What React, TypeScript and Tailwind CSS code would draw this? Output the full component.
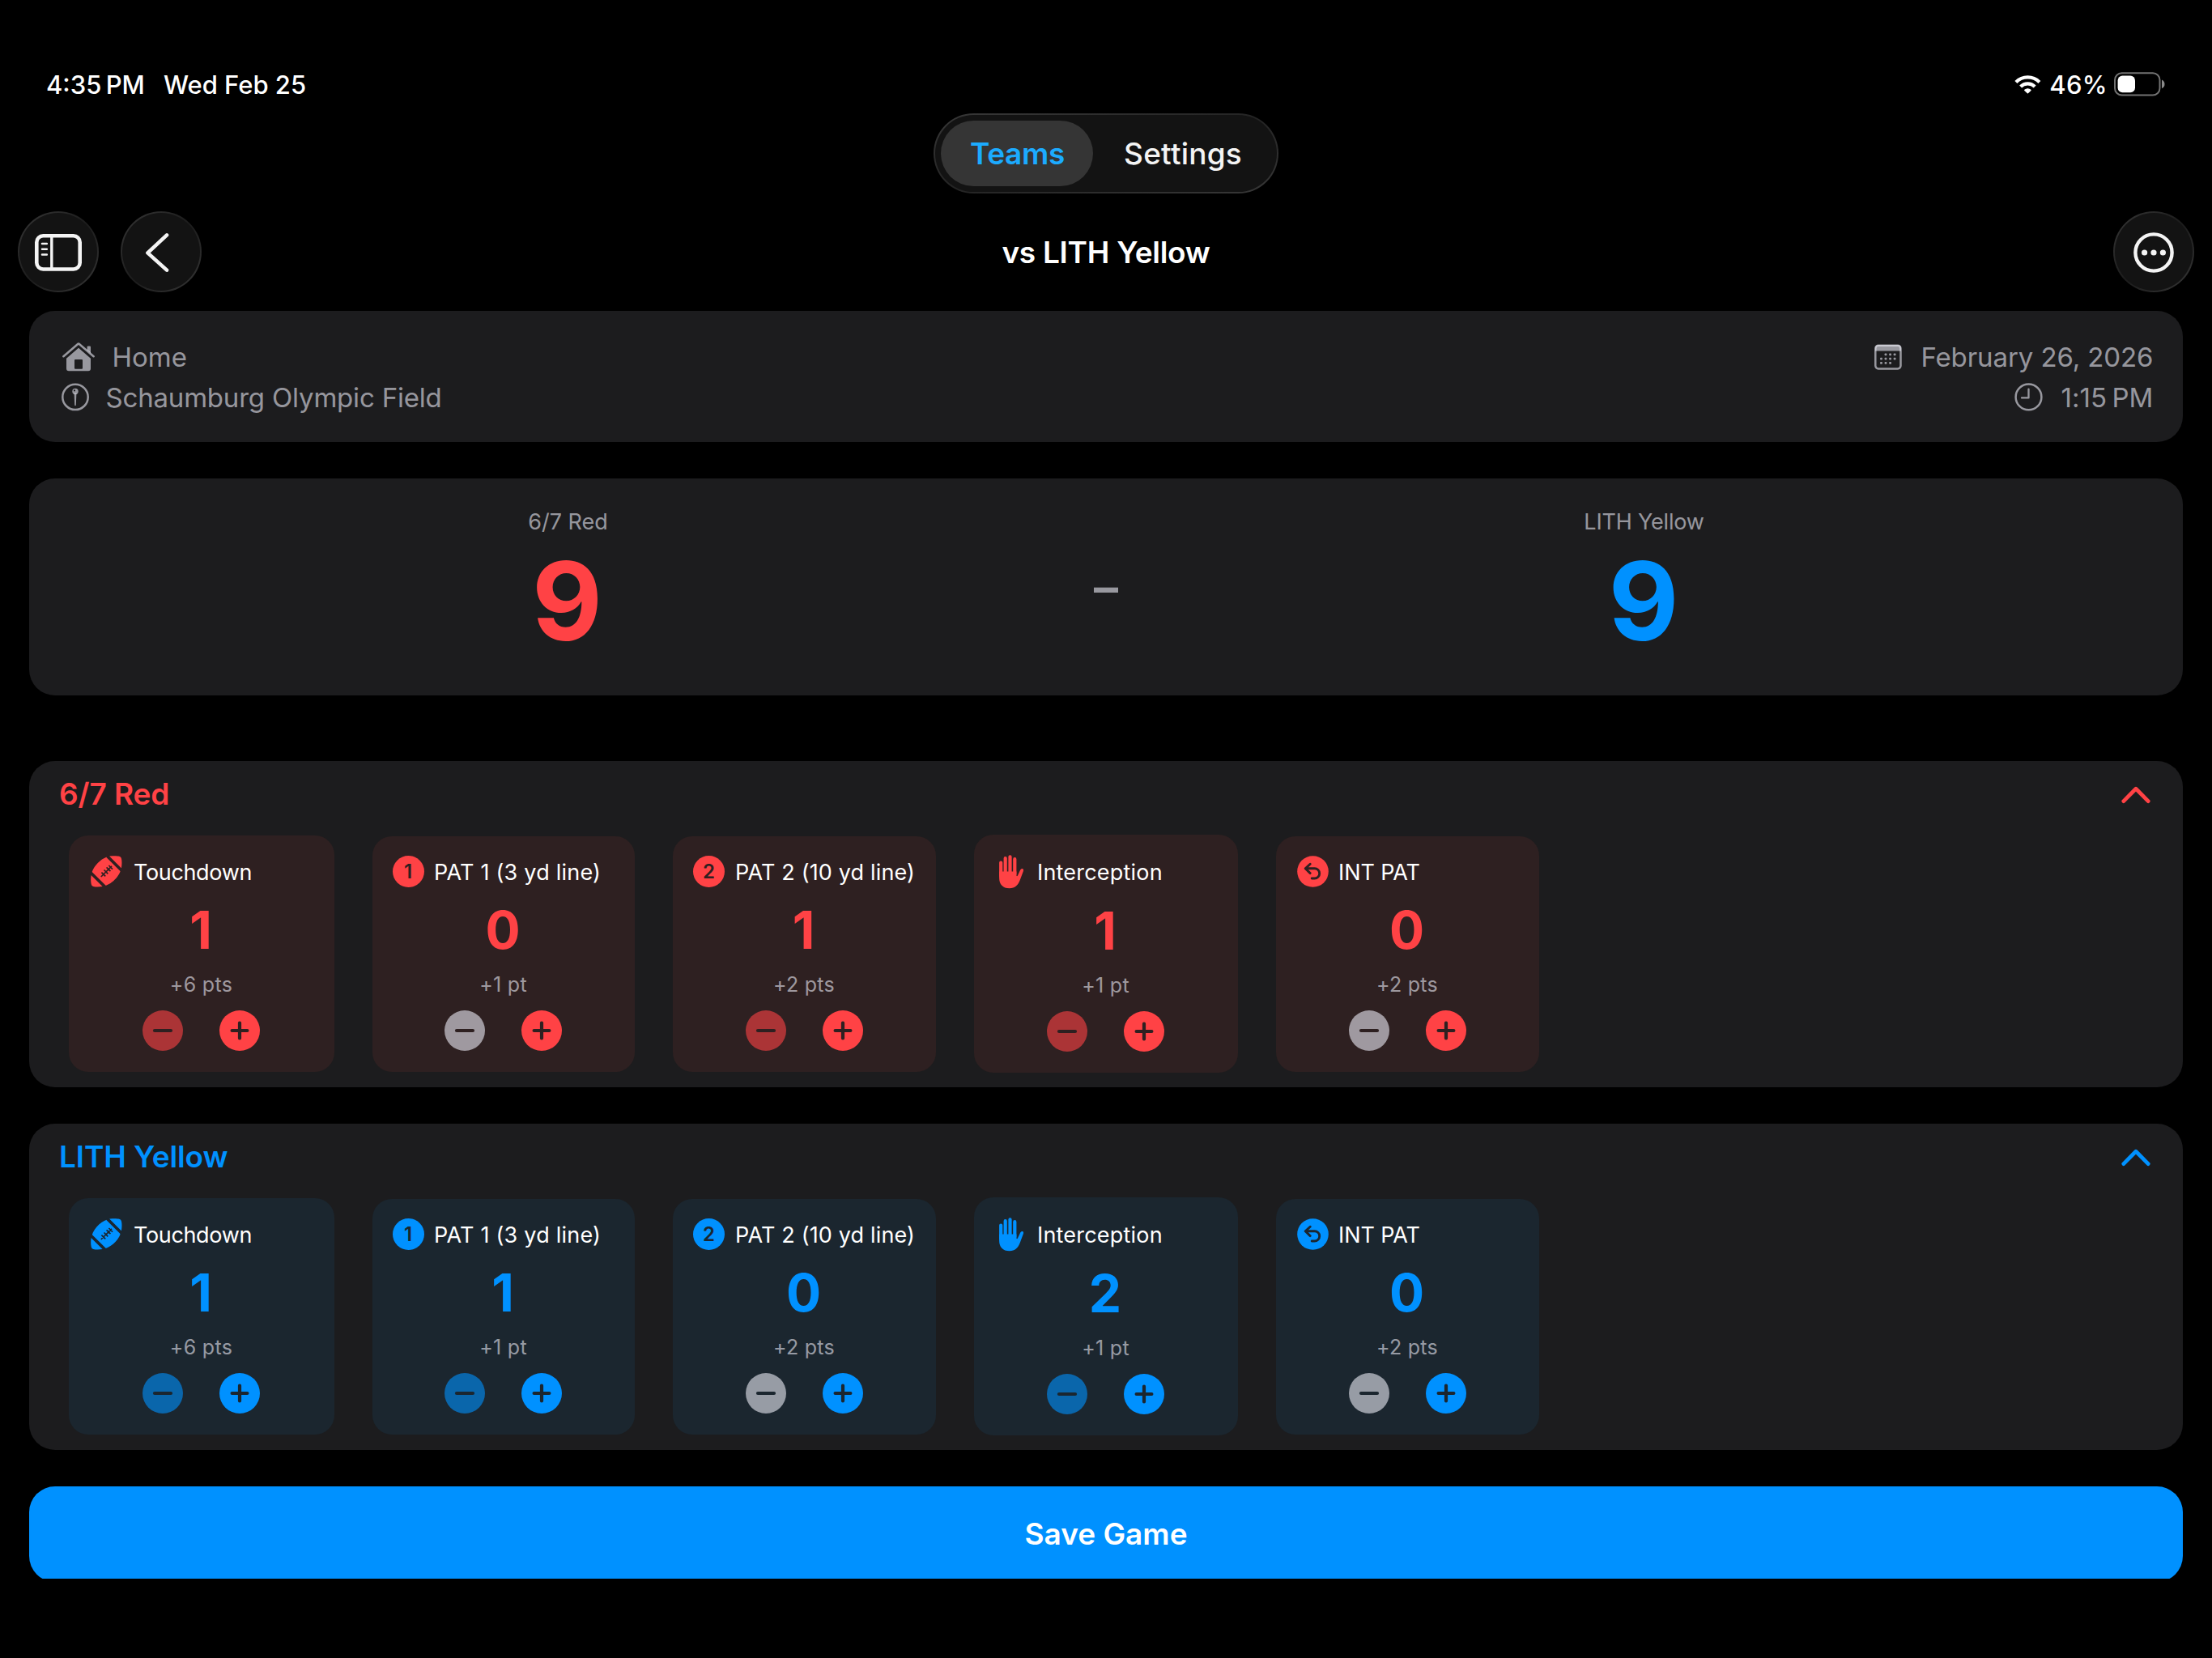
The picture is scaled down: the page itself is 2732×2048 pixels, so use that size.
import React, { useState } from 'react';
import clsx from 'clsx';

type TeamKey = 'home' | 'away';
type PlayKey = 'touchdown' | 'pat1' | 'pat2' | 'interception' | 'intPat';

interface Play {
    key: PlayKey;
    label: string;
    points: number;
    card: string;
    header: string;
    icon: string;
    text: string;
}

interface Theme {
    text: string;
    fill: string;
    card: string;
    cutText: string;
    cutStroke: string;
}

const plays: Play[] = [
    { key: 'touchdown', label: 'Touchdown', points: 6, card: 'w-[328px]', header: 'h-[41px]', icon: 'w-[44px] mr-3', text: 'tracking-[-0.35px]' },
    { key: 'pat1', label: 'PAT 1 (3 yd line)', points: 1, card: 'w-[324px]', header: 'h-[40px]', icon: 'w-[40px] mr-3', text: 'tracking-[0.22px]' },
    { key: 'pat2', label: 'PAT 2 (10 yd line)', points: 2, card: 'w-[325px]', header: 'h-[40px]', icon: 'w-[41px] mr-3', text: 'tracking-[0.16px]' },
    { key: 'interception', label: 'Interception', points: 1, card: 'w-[326px]', header: 'h-[43px]', icon: 'w-[45px] mr-[9px]', text: 'tracking-[0.2px]' },
    { key: 'intPat', label: 'INT PAT', points: 2, card: 'w-[325px]', header: 'h-[40px]', icon: 'w-[42px] mr-[11px]', text: 'tracking-[-0.1px]' },
];

const themes: Record<TeamKey, Theme> = {
    home: {
        text: 'text-[#ff4245]',
        fill: 'bg-[#ff4245]',
        card: 'bg-[#2e2021]',
        cutText: 'text-[#2e2021]',
        cutStroke: 'stroke-[#2e2021]',
    },
    away: {
        text: 'text-[#0091ff]',
        fill: 'bg-[#0091ff]',
        card: 'bg-[#1b262f]',
        cutText: 'text-[#1b262f]',
        cutStroke: 'stroke-[#1b262f]',
    },
};

const teamNames: Record<TeamKey, string> = { home: '6/7 Red', away: 'LITH Yellow' };

function WifiIcon() {
    return (
        <svg width="33" height="23" viewBox="0 0 33 23" fill="none" stroke="currentColor" strokeWidth="4.2">
            <path d="M1.9 8.4A20.5 20.5 0 0 1 30.9 8.4" />
            <path d="M7.6 14A12.5 12.5 0 0 1 25.2 14" />
            <path d="M16.4 21.6L12.9 18.3A5.2 5.2 0 0 1 19.9 18.3Z" fill="currentColor" strokeWidth="1.6" strokeLinejoin="round" />
        </svg>
    );
}

function BatteryIcon() {
    return (
        <svg width="63" height="30" viewBox="0 0 63 30">
            <rect x="1" y="1.2" width="55.5" height="27.4" rx="8.6" fill="none" stroke="#727272" strokeWidth="2" />
            <rect x="4.6" y="4.6" width="21.4" height="20.6" rx="5.8" fill="#fff" />
            <path d="M59 9.6C61.4 10.6 62.5 12.6 62.5 14.9C62.5 17.2 61.4 19.2 59 20.2Z" fill="#8a8a8a" />
        </svg>
    );
}

function SidebarIcon() {
    return (
        <svg width="58" height="46" viewBox="0 0 58 46" fill="none" stroke="currentColor" strokeLinecap="round" className="mt-[2px] -ml-px">
            <rect x="2.3" y="2.3" width="53.4" height="41.2" rx="8" strokeWidth="4.6" />
            <path d="M20.8 3V43" strokeWidth="3.4" />
            <path d="M9 12H14.8M9 18.8H14.8M9 25.5H14.8" strokeWidth="2.6" />
        </svg>
    );
}

function BackIcon() {
    return (
        <svg width="30" height="50" viewBox="0 0 30 50" fill="none" stroke="currentColor" strokeWidth="4.6" strokeLinecap="round" strokeLinejoin="round" className="mt-[2px] -ml-[10px]">
            <path d="M27 3.4L3.4 25.4L27 46.6" />
        </svg>
    );
}

function MoreIcon() {
    return (
        <svg width="50" height="50" viewBox="0 0 50 50" className="mt-px">
            <circle cx="25" cy="25" r="22.6" fill="none" stroke="currentColor" strokeWidth="4.4" />
            <circle cx="13.6" cy="25" r="3.6" fill="currentColor" />
            <circle cx="25" cy="25" r="3.6" fill="currentColor" />
            <circle cx="36.4" cy="25" r="3.6" fill="currentColor" />
        </svg>
    );
}

function HouseIcon() {
    return (
        <svg width="40" height="36" viewBox="0 0 40 36" className="ml-px">
            <path d="M1.4 17.2L18.8 2.2Q20 1.2 21.2 2.2L38.6 17.2" fill="none" stroke="currentColor" strokeWidth="2.6" strokeLinecap="round" strokeLinejoin="round" />
            <path d="M30.6 9.5V5.4Q30.6 4.4 31.6 4.4H34Q35 4.4 35 5.4V13.4Z" fill="currentColor" />
            <path d="M20 6.8L35 19.8V32.3Q35 35.3 32 35.3H8Q5 35.3 5 32.3V19.8ZM15 22V31.8Q15 32.8 16 32.8H24Q25 32.8 25 31.8V22Q25 21 24 21H16Q15 21 15 22Z" fill="currentColor" fillRule="evenodd" />
        </svg>
    );
}

function PinIcon() {
    return (
        <svg width="34" height="35" viewBox="0 0 34 35">
            <circle cx="17" cy="17.4" r="15.7" fill="none" stroke="currentColor" strokeWidth="2.5" />
            <circle cx="17" cy="10.4" r="3.7" fill="currentColor" />
            <circle cx="16" cy="9.4" r="1.1" className="fill-[#1c1c1e]" />
            <path d="M15.6 13H18.4L17.8 27.4Q17 29 16.2 27.4Z" fill="currentColor" />
        </svg>
    );
}

function CalendarIcon() {
    const dots = [
        [14, 12.8], [19.6, 12.8], [25.1, 12.8],
        [8.5, 18.2], [14, 18.2], [19.6, 18.2], [25.1, 18.2],
        [8.5, 23.4], [14, 23.4], [19.6, 23.4],
    ];

    return (
        <svg width="34" height="32" viewBox="0 0 34 32">
            <rect x="1.3" y="1.8" width="31.2" height="28.6" rx="3.6" fill="none" stroke="currentColor" strokeWidth="2.5" />
            <path d="M1 8.6V5Q1 1 5 1H29Q33 1 33 5V8.6Z" fill="currentColor" />
            {dots.map(([x, y]) => (
                <rect key={`${x}-${y}`} x={x - 1.4} y={y - 1.4} width="2.8" height="2.8" rx="0.8" fill="currentColor" />
            ))}
        </svg>
    );
}

function ClockIcon() {
    return (
        <svg width="35" height="35" viewBox="0 0 35 35" fill="none" stroke="currentColor" strokeWidth="2.5" strokeLinecap="round" strokeLinejoin="round">
            <circle cx="17.5" cy="17.4" r="15.9" />
            <path d="M17.5 7.6V18.4H9" strokeWidth="2.3" />
        </svg>
    );
}

function ChevronUp() {
    return (
        <svg width="36" height="22" viewBox="0 0 36 22" fill="none" stroke="currentColor" strokeWidth="4.8" strokeLinecap="round" strokeLinejoin="round">
            <path d="M2.8 18.6L18 3.2L33.2 18.6" />
        </svg>
    );
}

function FootballIcon({ cut }: { cut: string }) {
    return (
        <svg width="39" height="39" viewBox="0 0 39 39" fill="none">
            <path d="M24 .6C28 0 32.5 0 35.2 .8C36.9 1.3 37.6 2.2 38 3.8C38.7 6.8 38.6 11 38 14.6C36.3 25.4 25.6 36.3 14.5 38.1C11 38.7 6 38.8 3.3 38C1.8 37.5 1 36.6 .7 35C0 32 0 28 .6 24.6C2.4 13.4 13 2.4 24 .6Z" fill="currentColor" />
            <path d="M20.4 .4L39 19M-.4 20.6L18.6 39.4" className={cut} strokeWidth="3.6" />
            <path d="M12.8 26L26 12.8M13.4 20.6L18.2 25.4M16.5 17.5L21.3 22.3M19.6 14.4L24.4 19.2M22.4 12L27 16.6" className={cut} strokeWidth="1.7" />
        </svg>
    );
}

function HandIcon() {
    return (
        <svg width="31" height="42" viewBox="0 0 31 42">
            <path d="M2.2 9.6V26M7.7 4.2V26M13.5 2.3V26M19.3 5.2V24" fill="none" stroke="currentColor" strokeWidth="4.2" strokeLinecap="round" />
            <path d="M.1 20.5H21.4V25.3C21.6 26.6 22.4 26.5 22.9 25.5L26.2 18.6C27.6 15.8 31 16.8 29.9 19.9L26 30.6C23.4 38 19.5 41.2 12.8 41.2C4.6 41.2 .1 36.2 .1 28.4Z" fill="currentColor" />
        </svg>
    );
}

function UndoIcon({ cut }: { cut: string }) {
    return (
        <svg width="39" height="39" viewBox="0 0 39 39" fill="none">
            <circle cx="19.5" cy="19.5" r="19.3" fill="currentColor" />
            <path d="M16.2 10.2L10.2 15.8L16.2 21.6M10.6 15.8H21.6A6.1 6.1 0 0 1 21.6 28H18.2" className={cut} strokeWidth="2.9" strokeLinecap="round" strokeLinejoin="round" />
        </svg>
    );
}

function NumberBadge({ value, theme }: { value: number; theme: Theme }) {
    return (
        <span className={clsx('w-[39px] h-[39px] shrink-0 rounded-full flex items-center justify-center text-2xl leading-none font-semibold', theme.fill, theme.cutText)}>
            {value}
        </span>
    );
}

function PlayIcon({ play, theme }: { play: PlayKey; theme: Theme }) {
    if (play === 'touchdown') return <FootballIcon cut={theme.cutStroke} />;
    if (play === 'pat1') return <NumberBadge value={1} theme={theme} />;
    if (play === 'pat2') return <NumberBadge value={2} theme={theme} />;
    if (play === 'interception') return <HandIcon />;
    return <UndoIcon cut={theme.cutStroke} />;
}

function StepButton({ kind, theme, disabled, onClick }: { kind: 'minus' | 'plus'; theme: Theme; disabled?: boolean; onClick: () => void }) {
    return (
        <button onClick={onClick} disabled={disabled} aria-label={kind} className={disabled ? 'text-[#ebebf5]/60' : theme.text}>
            <svg width="50" height="50" viewBox="0 0 50 50" fill="none">
                <circle cx="25" cy="25" r="25" fill="currentColor" className={clsx(kind === 'minus' && !disabled && 'opacity-60')} />
                <path d={kind === 'minus' ? 'M15 25H35' : 'M15.6 25H34.4M25 15.6V34.4'} className={theme.cutStroke} strokeWidth="4.2" strokeLinecap="round" />
            </svg>
        </button>
    );
}

function PlayCard({ play, count, theme, onChange }: { play: Play; count: number; theme: Theme; onChange: (delta: number) => void }) {
    return (
        <div className={clsx('flex flex-col items-center rounded-[24px] py-6', play.card, theme.card)}>
            <div className={clsx('w-full flex items-center pl-6', play.header)}>
                <div className={clsx('flex justify-center shrink-0', play.icon, theme.text)}>
                    <PlayIcon play={play.key} theme={theme} />
                </div>
                <span className={clsx('pt-0.5 text-[27px] leading-none text-white whitespace-nowrap', play.text)}>{play.label}</span>
            </div>

            <div className={clsx('mt-4 pr-0.5 h-[73px] leading-[72px] text-[64px] font-bold', theme.text)}>{count}</div>

            <div className="mt-[17px] pr-px h-[27px] leading-[27px] text-[25px] tracking-[0.3px] text-[#ebebf5]/60">
                +{play.points} {play.points === 1 ? 'pt' : 'pts'}
            </div>

            <div className="mt-[17px] pr-px h-[52px] mb-px flex items-center gap-[45px]">
                <StepButton kind="minus" theme={theme} disabled={count === 0} onClick={() => onChange(-1)} />
                <StepButton kind="plus" theme={theme} onClick={() => onChange(1)} />
            </div>
        </div>
    );
}

function RoundButton({ label, children }: { label: string; children: React.ReactNode }) {
    return (
        <button aria-label={label} className="w-[100px] h-[100px] rounded-full p-[2px] bg-linear-to-br from-[#383838] via-[#1c1c1c] to-[#383838]">
            <span className="w-full h-full rounded-full bg-[#131313] text-[#f4f4f4] flex items-center justify-center">{children}</span>
        </button>
    );
}

export default function App() {
    const [open, setOpen] = useState<Record<TeamKey, boolean>>({ home: true, away: true });
    const [counts, setCounts] = useState<Record<TeamKey, Record<PlayKey, number>>>({
        home: { touchdown: 1, pat1: 0, pat2: 1, interception: 1, intPat: 0 },
        away: { touchdown: 1, pat1: 1, pat2: 0, interception: 2, intPat: 0 },
    });

    const score = (team: TeamKey) => plays.reduce((sum, play) => sum + play.points * counts[team][play.key], 0);

    const change = (team: TeamKey, key: PlayKey, delta: number) => {
        setCounts((prev) => ({
            ...prev,
            [team]: { ...prev[team], [key]: Math.max(0, prev[team][key] + delta) },
        }));
    };

    return (
        <div className="w-[2732px] h-[2048px] overflow-hidden bg-black text-white font-['Inter','Liberation_Sans',sans-serif]">

            {/* Status bar */}
            <div className="mt-[84px] h-10 pl-[57px] pr-[58px] flex items-center justify-between text-[31px] leading-10 font-medium">
                <div className="pt-px flex gap-[23px]">
                    <span>4:35{'\u2009'}PM</span>
                    <span>Wed Feb 25</span>
                </div>
                <div className="flex items-center">
                    <WifiIcon />
                    <span className="pt-px ml-2.5 mr-2 tracking-[0.4px]">46%</span>
                    <BatteryIcon />
                </div>
            </div>

            {/* Tabs */}
            <div className="mt-4 flex justify-center">
                <div className="w-[426px] h-[99px] rounded-full p-[2px] bg-linear-to-br from-[#383838] via-[#242424] to-[#383838]">
                    <div className="h-full rounded-full bg-[#131313] p-[7px] flex items-center text-[37px]">
                        <button className="w-[188px] h-[81px] pl-px rounded-full bg-[#353535] text-[#1cabff] font-semibold tracking-[-0.3px]">Teams</button>
                        <button className="flex-1 pl-0.5 text-[#f4f4f4] font-medium tracking-[0.2px]">Settings</button>
                    </div>
                </div>
            </div>

            {/* Toolbar */}
            <div className="mt-[22px] px-[22px] grid grid-cols-3 items-center">
                <div className="flex gap-[27px]">
                    <RoundButton label="Toggle sidebar"><SidebarIcon /></RoundButton>
                    <RoundButton label="Back"><BackIcon /></RoundButton>
                </div>
                <h1 className="pt-0.5 text-center text-[37px] font-semibold tracking-[-0.26px]">vs LITH Yellow</h1>
                <div className="flex justify-end">
                    <RoundButton label="More"><MoreIcon /></RoundButton>
                </div>
            </div>

            <div className="mt-[23px] px-9">

                {/* Game info */}
                <div className="h-[162px] rounded-[32px] bg-[#1c1c1e] pl-[39.5px] pr-[36.5px] pt-px flex items-center justify-between text-[33px] leading-[50px] text-[#ebebf5]/60">
                    <div>
                        <div className="flex items-center gap-[22px]">
                            <HouseIcon />
                            <span>Home</span>
                        </div>
                        <div className="flex items-center gap-[21px]">
                            <PinIcon />
                            <span className="tracking-[-0.19px]">Schaumburg Olympic Field</span>
                        </div>
                    </div>
                    <div>
                        <div className="flex items-center justify-end gap-[23px]">
                            <CalendarIcon />
                            <span className="tracking-[-0.09px]">February 26, 2026</span>
                        </div>
                        <div className="flex items-center justify-end gap-[22px]">
                            <ClockIcon />
                            <span className="tracking-[0.1px]">1:15{'\u2009'}PM</span>
                        </div>
                    </div>
                </div>

                {/* Score */}
                <div className="mt-[45px] h-[267.5px] rounded-[32px] bg-[#1c1c1e] px-8 flex items-center gap-4">
                    <div className="flex-1 text-center">
                        <div className="pt-px text-[27px] leading-[34px] text-[#ebebf5]/60">{teamNames.home}</div>
                        <div className="pr-0.5 pb-px text-[134px] leading-[160px] font-bold text-[#ff4245]">{score('home')}</div>
                    </div>
                    <div className="text-[60px] leading-[72px] font-semibold text-[#98989f]">–</div>
                    <div className="flex-1 text-center">
                        <div className="pt-px text-[27px] leading-[34px] tracking-[-0.2px] text-[#ebebf5]/60">{teamNames.away}</div>
                        <div className="pr-px pb-px text-[134px] leading-[160px] font-bold text-[#0091ff]">{score('away')}</div>
                    </div>
                </div>

                {/* Teams */}
                <div className="mt-[81.5px] flex flex-col gap-[45.5px]">
                    {(['home', 'away'] as TeamKey[]).map((team) => {

                        const theme = themes[team];

                        return (
                            <div key={team} className="rounded-[32px] bg-[#1c1c1e] pb-[17.5px]">
                                <button
                                    onClick={() => setOpen((prev) => ({ ...prev, [team]: !prev[team] }))}
                                    className={clsx('w-full h-[91px] pl-[37px] pr-[40.5px] pb-[10px] flex items-center justify-between text-[37px] font-semibold', theme.text)}
                                >
                                    <span className="tracking-[-0.1px]">{teamNames[team]}</span>
                                    <span className={clsx('pt-[3px]', !open[team] && 'rotate-180')}><ChevronUp /></span>
                                </button>

                                {open[team] && (
                                    <div className="pl-[49px] flex items-center gap-[47px]">
                                        {plays.map((play) => (
                                            <PlayCard
                                                key={play.key}
                                                play={play}
                                                count={counts[team][play.key]}
                                                theme={theme}
                                                onChange={(delta) => change(team, play.key, delta)}
                                            />
                                        ))}
                                    </div>
                                )}
                            </div>
                        );
                    })}
                </div>

                <div className="mt-[45.5px] h-[113.5px] overflow-hidden">
                    <button className="w-full h-[118px] rounded-[32px] bg-[#0091ff] text-[37px] font-semibold">Save Game</button>
                </div>
            </div>
        </div>
    );
}
